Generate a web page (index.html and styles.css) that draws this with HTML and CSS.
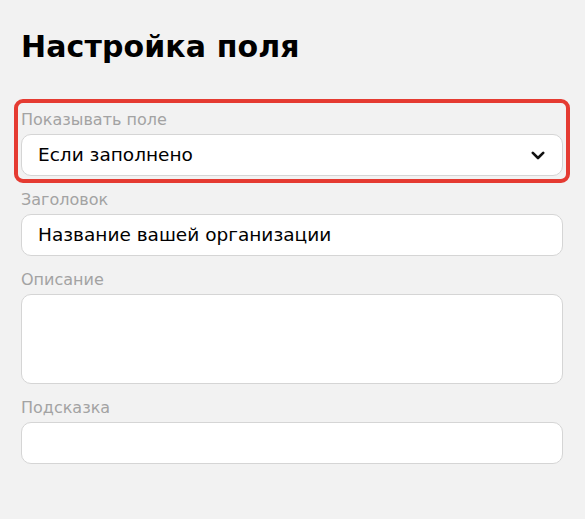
FILE: index.html
```html
<!DOCTYPE html>
<html lang="ru">
<head>
<meta charset="utf-8">
<title>Настройка поля</title>
<link rel="stylesheet" href="styles.css">
</head>
<body>
<main class="page">
  <h1 class="title">Настройка поля</h1>
  <div class="fields">
    <div class="field field--highlight">
      <div class="label">Показывать поле</div>
      <div class="control select">
        <span class="value">Если заполнено</span>
        <svg class="chevron" width="14" height="9" viewBox="0 0 14 9" aria-hidden="true">
          <path d="M1.8 1.8 L7 7 L12.2 1.8" fill="none" stroke="#111" stroke-width="2.6" stroke-linecap="round" stroke-linejoin="round"/>
        </svg>
      </div>
    </div>
    <div class="field">
      <div class="label">Заголовок</div>
      <div class="control input"><span class="value">Название вашей организации</span></div>
    </div>
    <div class="field">
      <div class="label">Описание</div>
      <div class="control textarea"></div>
    </div>
    <div class="field">
      <div class="label">Подсказка</div>
      <div class="control input"></div>
    </div>
  </div>
</main>
</body>
</html>
```

FILE: styles.css
```css
html, body {
  margin: 0;
  padding: 0;
  background: #f2f2f2;
}

body {
  font-family: "DejaVu Sans", "Liberation Sans", sans-serif;
  color: #000;
}

.page {
  padding: 29px 22px 0 21px;
}

.title {
  margin: 0;
  font-size: 30px;
  line-height: 36px;
  font-weight: 700;
  letter-spacing: 0.1px;
}

.fields {
  margin-top: 41px;
  display: flex;
  flex-direction: column;
  gap: 10px;
}

.field--highlight {
  outline: 4px solid #e53b32;
  outline-offset: 3px;
  border-radius: 2px;
}

.label {
  padding-top: 4px;
  margin-bottom: 4px;
  font-size: 16px;
  line-height: 20px;
  color: #a3a3a3;
}

.control {
  box-sizing: border-box;
  background: #fff;
  border: 1px solid #d5d5d5;
  border-radius: 10px;
}

.select,
.input {
  height: 42px;
  display: flex;
  align-items: center;
  padding: 0 17px 0 16px;
}

.select {
  justify-content: space-between;
}

.value {
  font-size: 18.5px;
  line-height: 22px;
  color: #000;
}

.chevron {
  display: block;
}

.textarea {
  height: 90px;
}
```
